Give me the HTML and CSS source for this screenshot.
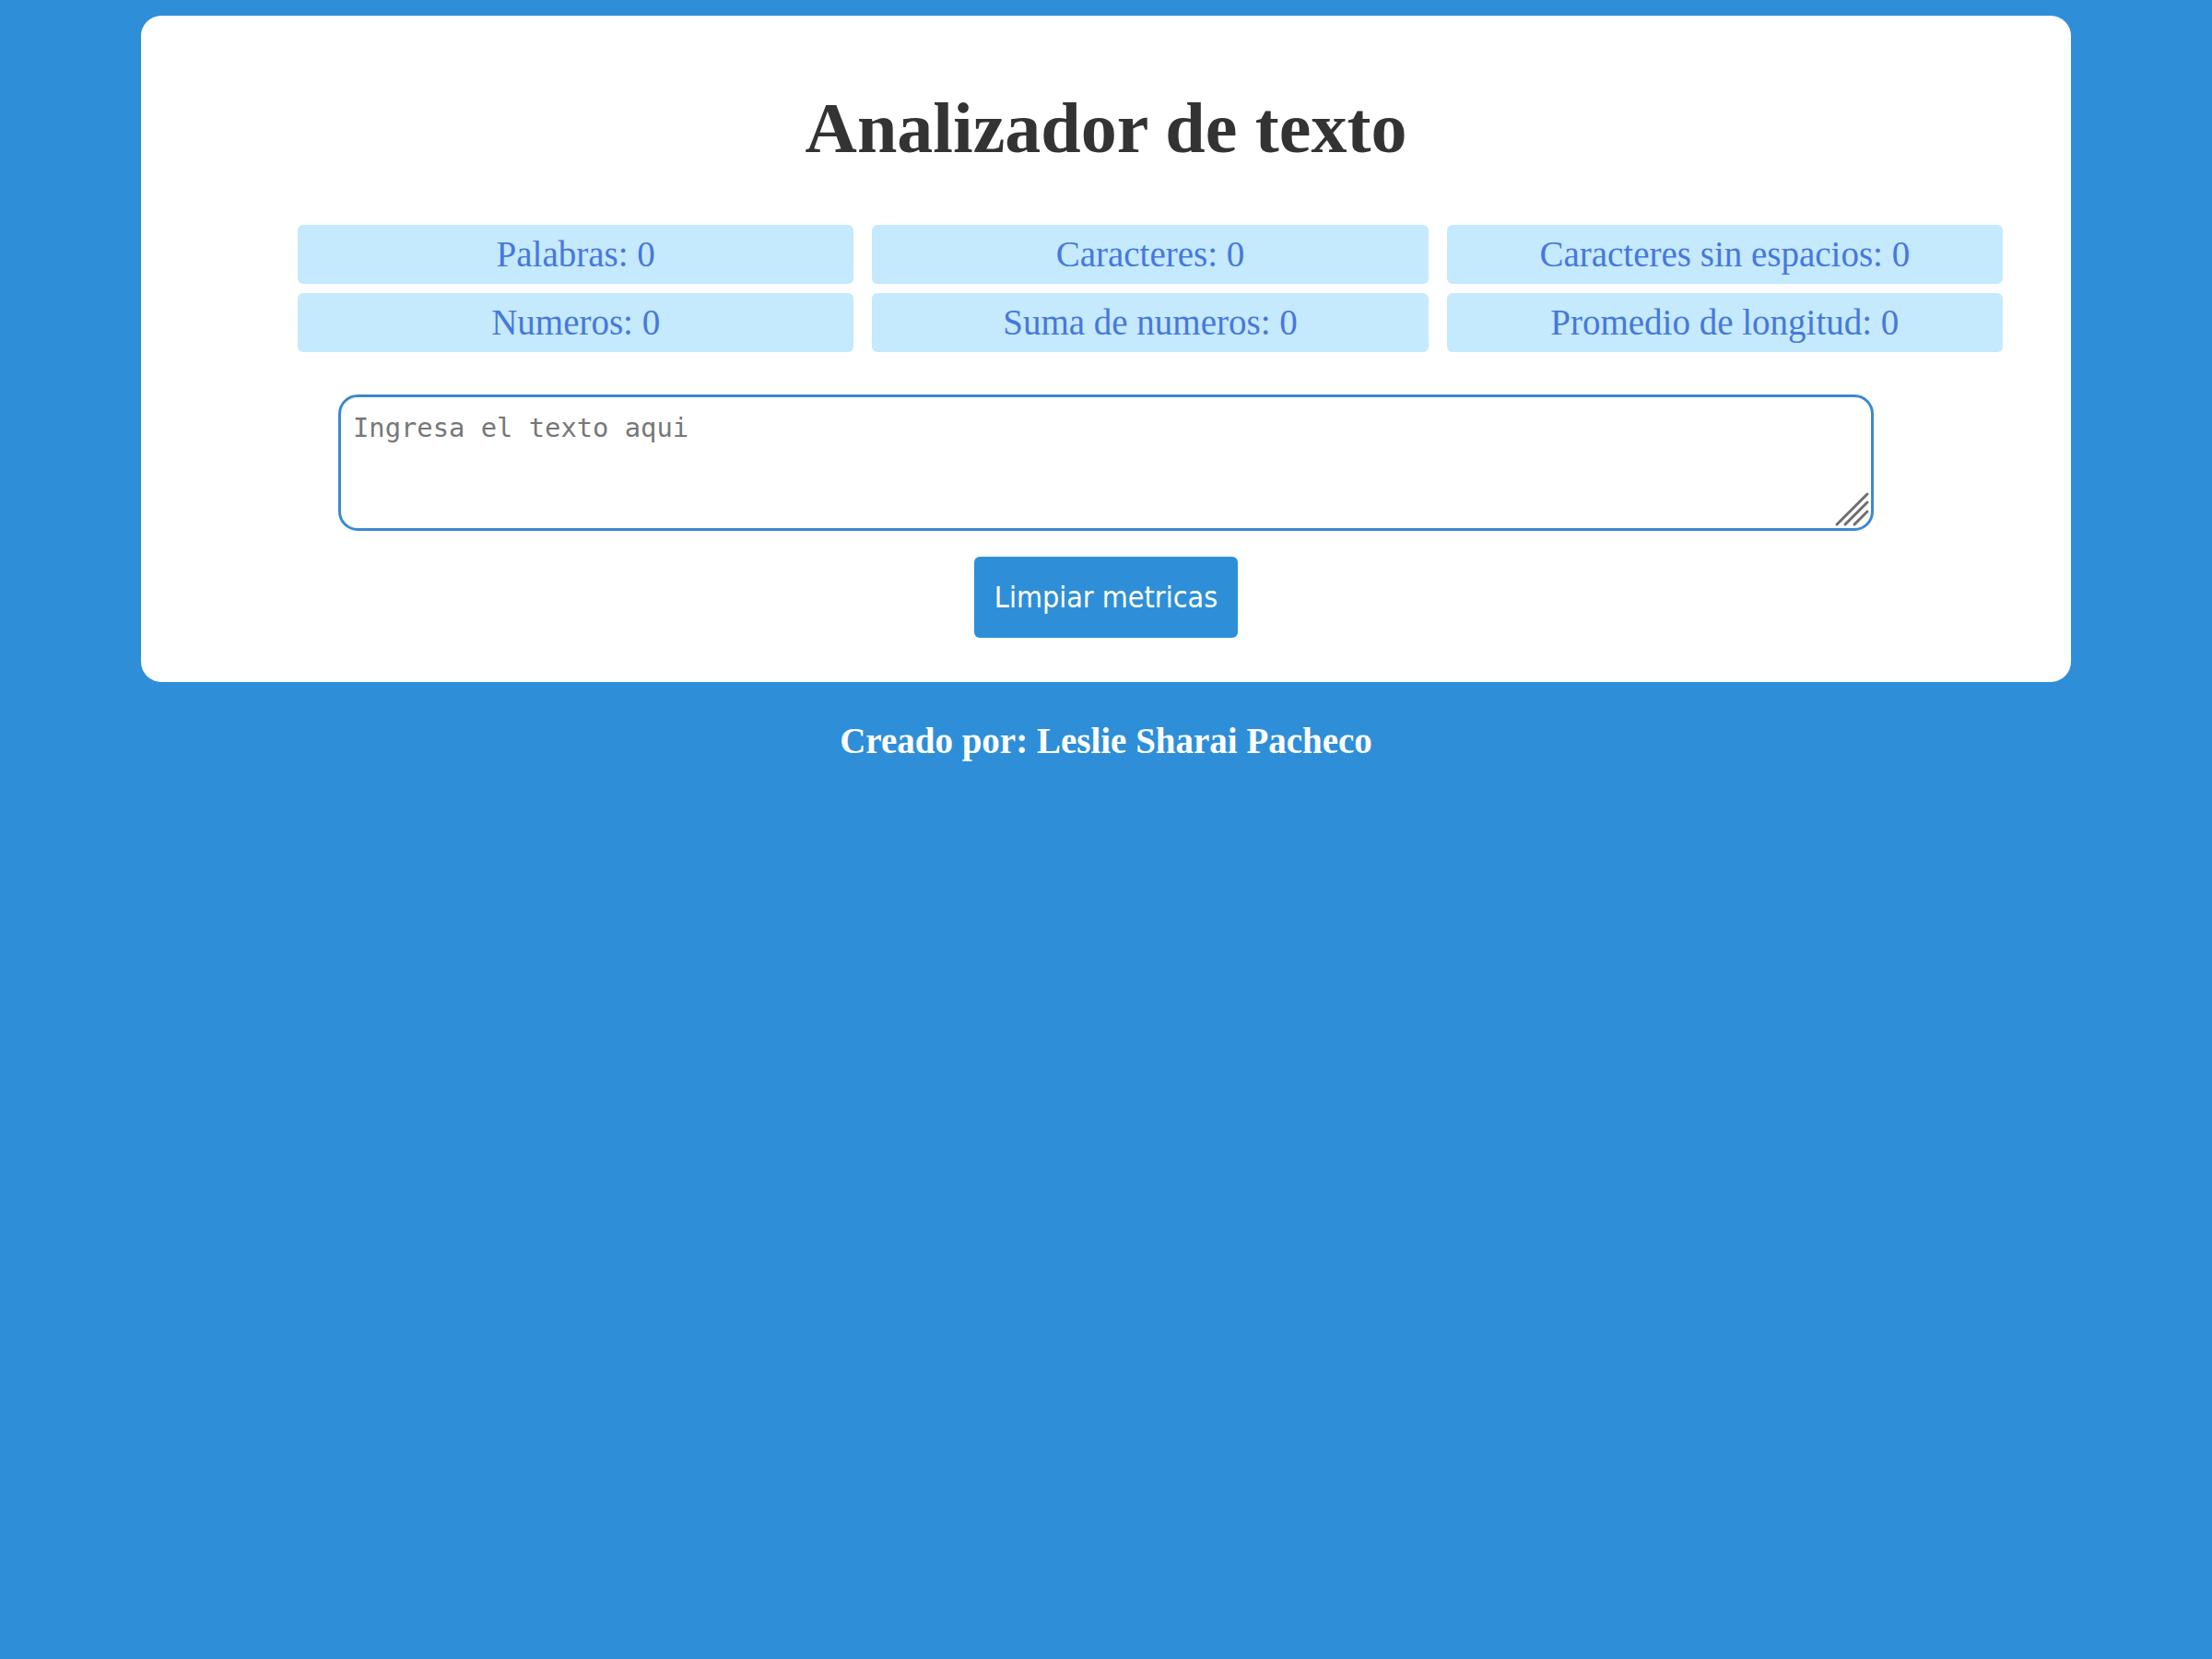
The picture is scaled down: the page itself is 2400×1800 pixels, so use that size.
FILE: index.html
```html
<!DOCTYPE html>
<html lang="es">
<head>
<meta charset="utf-8">
<title>Analizador de texto</title>
<link rel="stylesheet" href="styles.css">
</head>
<body>
<main class="card">
  <h1 class="title">Analizador de texto</h1>
  <ul class="stats">
    <li class="stat">Palabras: 0</li>
    <li class="stat">Caracteres: 0</li>
    <li class="stat">Caracteres sin espacios: 0</li>
    <li class="stat">Numeros: 0</li>
    <li class="stat">Suma de numeros: 0</li>
    <li class="stat">Promedio de longitud: 0</li>
  </ul>
  <div class="input-wrap">
    <textarea class="input" placeholder="Ingresa el texto aqui"></textarea>
    <svg class="grip" width="40" height="40" viewBox="0 0 40 40" aria-hidden="true">
      <line x1="3" y1="36" x2="36" y2="3" />
      <line x1="12" y1="36" x2="36" y2="12" />
      <line x1="22" y1="36" x2="36" y2="22" />
    </svg>
  </div>
  <div class="actions">
    <button class="btn" type="button">Limpiar metricas</button>
  </div>
</main>
<footer class="footer">Creado por: Leslie Sharai Pacheco</footer>
</body>
</html>
```

FILE: styles.css
```css
html, body {
  margin: 0;
  padding: 0;
}

body {
  background: #2e8fd8;
  font-family: "Liberation Serif", "Times New Roman", serif;
  font-size: 39px;
  padding-top: 17px;
}

.card {
  display: block;
  margin: 0 153px;
  background: #ffffff;
  border-radius: 22px;
  padding: 77px 74px 48px;
}

.title {
  margin: 0;
  text-align: center;
  font-size: 78px;
  font-weight: bold;
  color: #333333;
  line-height: normal;
}

.stats {
  list-style: none;
  margin: 60px 0 0;
  padding: 0 0 0 96px;
  display: grid;
  grid-template-columns: repeat(3, 1fr);
  gap: 10px 20px;
}

.stat {
  background: #c5e9fd;
  color: #4678dc;
  border-radius: 6px;
  text-align: center;
  height: 64px;
  line-height: 64px;
  font-size: 39px;
}

.input-wrap {
  position: relative;
  width: 1666px;
  margin: 46px auto 0;
}

.input {
  display: block;
  box-sizing: border-box;
  width: 100%;
  height: 148px;
  border: 3px solid #3b88d2;
  border-radius: 21px;
  padding: 16px 13px;
  font-family: "DejaVu Sans Mono", "Liberation Mono", monospace;
  font-size: 28.8px;
  color: #333;
  resize: none;
  outline: none;
  background: #fff;
}

.input::placeholder {
  color: #777777;
}

.grip {
  position: absolute;
  right: 3px;
  bottom: 3px;
  stroke: #6e6e6e;
  stroke-width: 3;
  stroke-linecap: round;
  pointer-events: none;
}

.actions {
  display: flex;
  justify-content: center;
  margin-top: 28px;
}

.btn {
  width: 286px;
  height: 88px;
  border: none;
  border-radius: 6px;
  background: #2e8fd8;
  color: #ffffff;
  font-family: "DejaVu Sans Condensed", "DejaVu Sans", sans-serif;
  font-stretch: condensed;
  font-size: 32px;
  padding: 0;
  cursor: pointer;
}

.footer {
  margin-top: 41px;
  text-align: center;
  color: #ffffff;
  font-weight: bold;
  font-size: 39px;
}
```
